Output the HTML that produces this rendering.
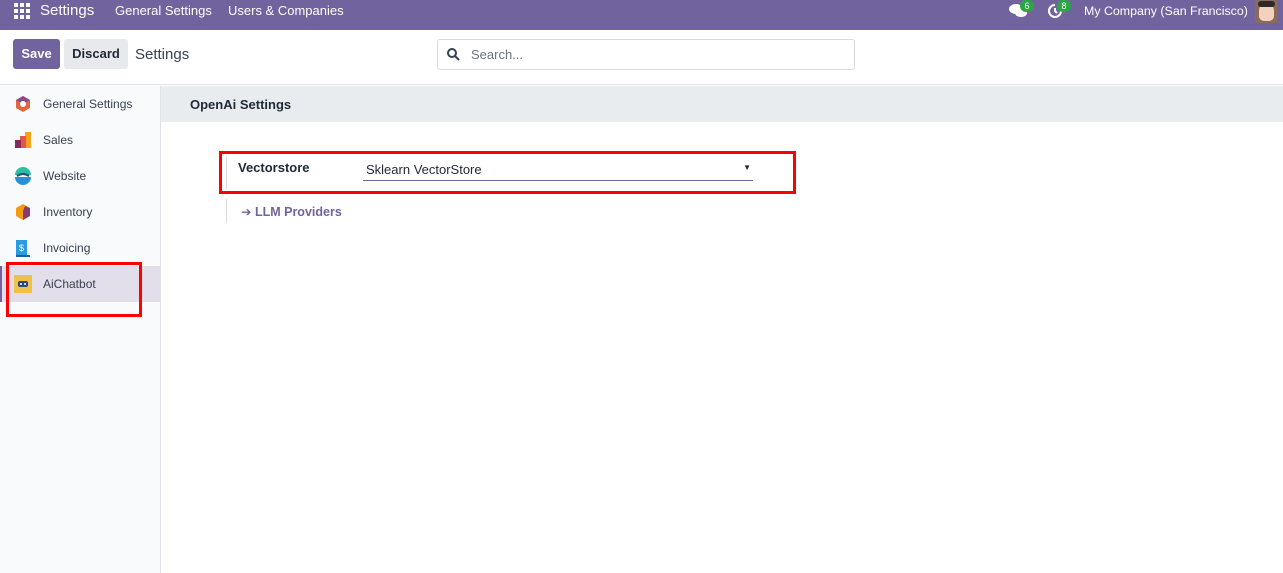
<!DOCTYPE html>
<html><head><style>
*{box-sizing:border-box;margin:0;padding:0}
body{width:1283px;height:573px;overflow:hidden;font-family:"Liberation Sans","DejaVu Sans",sans-serif;font-size:13px;color:#374151;background:#fff;position:relative}
.top{position:absolute;left:0;top:0;width:1283px;height:30px;background:#71639e;color:#fff}
.top span{position:absolute;top:3px;font-size:13px}
.cp{position:absolute;left:0;top:30px;width:1283px;height:55px;background:#fff;border-bottom:1px solid #dee2e6}
.btn{position:absolute;top:9px;height:30px;border-radius:3px;font-weight:bold;font-size:13px;line-height:30px;text-align:center}
.side{position:absolute;left:0;top:86px;width:161px;height:487px;background:#f9fafb;border-right:1px solid #dee2e6}
.item{position:absolute;left:0;width:160px;height:36px}
.item span{position:absolute;left:43px;top:11px;font-size:12px;color:#374151}
.ic{position:absolute;left:14px;top:9px;width:18px;height:18px}
.red{position:absolute;border:3px solid #f00}
</style></head><body>
<div class="top">
 <svg style="position:absolute;left:14px;top:3px" width="16" height="16" viewBox="0 0 16 16" fill="#fff"><rect x="0" y="0" width="4" height="4"/><rect x="6" y="0" width="4" height="4"/><rect x="12" y="0" width="4" height="4"/><rect x="0" y="6" width="4" height="4"/><rect x="6" y="6" width="4" height="4"/><rect x="12" y="6" width="4" height="4"/><rect x="0" y="12" width="4" height="4"/><rect x="6" y="12" width="4" height="4"/><rect x="12" y="12" width="4" height="4"/></svg>
 <span style="left:40px;top:2px;font-size:15px">Settings</span>
 <span style="left:115px">General Settings</span>
 <span style="left:228px">Users &amp; Companies</span>
 <svg style="position:absolute;left:1009px;top:3px" width="18" height="16" viewBox="0 0 18 16" fill="#fff"><ellipse cx="7" cy="6" rx="7" ry="5"/><ellipse cx="12" cy="10" rx="6" ry="4"/></svg>
 <div style="position:absolute;left:1020px;top:0px;width:14px;height:12px;border-radius:6px;background:#28a745;font-size:9px;text-align:center;line-height:12px">6</div>
 <svg style="position:absolute;left:1047px;top:3px" width="16" height="16" viewBox="0 0 16 16" fill="none" stroke="#fff" stroke-width="2"><path d="M14 8A6 6 0 1 1 8 2M8 5v3l2 2"/></svg>
 <div style="position:absolute;left:1057px;top:0px;width:14px;height:12px;border-radius:6px;background:#28a745;font-size:9px;text-align:center;line-height:12px">8</div>
 <span style="left:1084px;font-size:12.4px;top:4px">My Company (San Francisco)</span>
 <div style="position:absolute;left:1255px;top:0px;width:23px;height:23px;border-radius:3px;background:#8b6a5a;overflow:hidden"><div style="position:absolute;left:4px;top:5px;width:15px;height:16px;border-radius:5px;background:#f2d2bd"></div><div style="position:absolute;left:3px;top:1px;width:17px;height:6px;background:#2a2a2a;border-radius:3px"></div></div>
</div>
<div class="cp">
 <div class="btn" style="left:13px;width:47px;background:#71639e;color:#fff">Save</div>
 <div class="btn" style="left:64px;width:64px;background:#e7e9ed;color:#1f2937">Discard</div>
 <div style="position:absolute;left:135px;top:16px;font-size:15px;color:#374151">Settings</div>
 <div style="position:absolute;left:437px;top:9px;width:418px;height:31px;border:1px solid #d8dadd;border-radius:3px">
  <svg style="position:absolute;left:9px;top:8px" width="13" height="13" viewBox="0 0 13 13" fill="none" stroke="#374151" stroke-width="2"><circle cx="5" cy="5" r="4"/><path d="M8 8l4 4"/></svg>
  <span style="position:absolute;left:33px;top:7px;color:#6b7280;font-size:13px">Search...</span>
 </div>
</div>
<div class="side">
 <div class="item" style="top:0"><svg class="ic" viewBox="0 0 18 18"><polygon points="9,1 16,5 16,13 9,17 2,13 2,5" fill="#e0663c"/><polygon points="9,1 16,5 9,9 2,5" fill="#8b4a8b"/><circle cx="9" cy="9" r="3" fill="#fff"/></svg><span>General Settings</span></div>
 <div class="item" style="top:36px"><svg class="ic" viewBox="0 0 18 18"><rect x="11" y="1" width="6" height="16" fill="#f7a21c"/><rect x="6" y="5" width="6" height="12" fill="#e0564a"/><rect x="1" y="9" width="6" height="8" fill="#8b2a5a"/></svg><span>Sales</span></div>
 <div class="item" style="top:72px"><svg class="ic" viewBox="0 0 18 18"><path d="M1 8a8 8 0 0 1 16 0z" fill="#2bbfa4"/><path d="M1 10h16a8 8 0 0 1-16 0z" fill="#2a8fd6"/><path d="M3 9q6-4 12 0" stroke="#1f4f7a" stroke-width="2" fill="none"/></svg><span>Website</span></div>
 <div class="item" style="top:108px"><svg class="ic" viewBox="0 0 18 18"><polygon points="9,1 16,5 16,13 9,17 2,13 2,5" fill="#f39c12"/><polygon points="11,3 16,5 16,13 9,17 9,8" fill="#8b3a6b"/></svg><span>Inventory</span></div>
 <div class="item" style="top:144px"><svg class="ic" viewBox="0 0 18 18"><rect x="2" y="1" width="11" height="15" fill="#2a9be0"/><path d="M2 16h14v2H2z" fill="#1f5fa0"/><text x="5" y="12" font-size="9" fill="#fff" font-family="Liberation Sans">$</text></svg><span>Invoicing</span></div>
 <div class="item" style="top:180px;background:#e2dfea;box-shadow:inset 2px 0 0 #71639e"><svg class="ic" viewBox="0 0 18 18"><rect x="0" y="0" width="18" height="18" fill="#f0c24b"/><rect x="4" y="6" width="10" height="6" rx="2" fill="#2f4a7a"/><circle cx="7" cy="9" r="1" fill="#fff"/><circle cx="11" cy="9" r="1" fill="#fff"/></svg><span>AiChatbot</span></div>
</div>
<div class="red" style="left:6px;top:262px;width:136px;height:55px"></div>
<div style="position:absolute;left:161px;top:86px;width:1122px;height:36px;background:#e9ecef"><span style="position:absolute;left:29px;top:11px;font-weight:bold;font-size:13px;color:#1f2937">OpenAi Settings</span></div>
<div style="position:absolute;left:226px;top:157px;width:1px;height:32px;background:#d8dadd"></div>
<div style="position:absolute;left:238px;top:160px;font-weight:bold;font-size:13px;color:#1f2937">Vectorstore</div>
<div style="position:absolute;left:363px;top:160px;width:390px;height:21px;border-bottom:1px solid #71639e;font-size:13px;color:#1f2937;padding-left:3px;padding-top:2px">Sklearn VectorStore<span style="position:absolute;right:2px;top:3px;font-size:8px">▼</span></div>
<div class="red" style="left:219px;top:151px;width:577px;height:43px"></div>
<div style="position:absolute;left:226px;top:199px;width:1px;height:24px;background:#d8dadd"></div>
<div style="position:absolute;left:241px;top:204px;font-weight:bold;font-size:12.5px;color:#71639e">➔ LLM Providers</div>
</body></html>
